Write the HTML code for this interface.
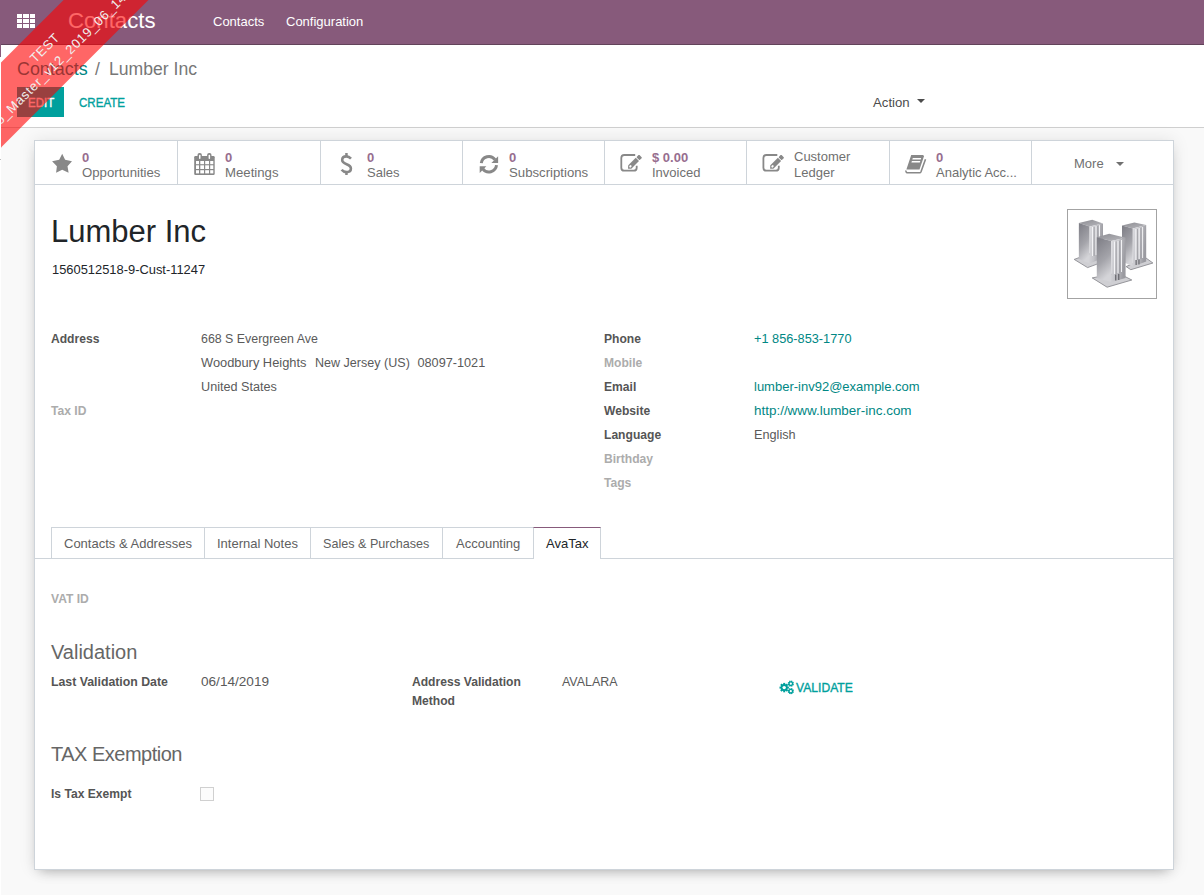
<!DOCTYPE html>
<html><head><meta charset="utf-8">
<style>
html,body{margin:0;padding:0;width:1204px;height:895px;overflow:hidden;background:#f9f9f9;font-family:"Liberation Sans",sans-serif;}
.a{position:absolute;}
.t{position:absolute;white-space:nowrap;line-height:1;font-family:"Liberation Sans",sans-serif;}
.b{font-weight:bold;}
.nav{position:absolute;left:0;top:0;width:1204px;height:44px;background:#875A7B;border-bottom:1px solid #62435a;}
.cp{position:absolute;left:0;top:45px;width:1204px;height:82px;background:#fff;border-bottom:1px solid #cfcfcf;}
.sheet{position:absolute;left:34px;top:140px;width:1138px;height:728px;background:#fff;border:1px solid #ced4da;box-shadow:0 0 16px rgba(0,0,0,0.09),0 6px 12px -6px rgba(0,0,0,0.3);}
.sep{position:absolute;top:141px;width:1px;height:43px;background:#ced4da;}
.ico{position:absolute;}
.sv{color:#976e8f;font-weight:bold;font-size:13px;}
.st{color:#707070;font-size:13px;}
.lbl{color:#555;font-weight:bold;font-size:12.1px;}
.mut{color:#acacac;font-weight:bold;font-size:12.1px;}
.val{color:#5a5a5a;font-size:13px;}
.lnk{color:#008784;font-size:13px;}
.tab{position:absolute;top:527px;height:30px;border:1px solid #ced4da;border-bottom:none;background:#fff;}
.tabt{color:#606060;font-size:13px;}
</style></head>
<body>
<!-- NAVBAR -->
<div class="nav"></div>
<!-- grid icon -->
<div class="a" style="left:17px;top:14px;width:18px;height:14px">
  <div class="a" style="left:0;top:0;width:5px;height:4px;background:#fff"></div>
  <div class="a" style="left:6px;top:0;width:6px;height:4px;background:#fff"></div>
  <div class="a" style="left:13px;top:0;width:5px;height:4px;background:#fff"></div>
  <div class="a" style="left:0;top:5px;width:5px;height:4px;background:#fff"></div>
  <div class="a" style="left:6px;top:5px;width:6px;height:4px;background:#fff"></div>
  <div class="a" style="left:13px;top:5px;width:5px;height:4px;background:#fff"></div>
  <div class="a" style="left:0;top:10px;width:5px;height:4px;background:#fff"></div>
  <div class="a" style="left:6px;top:10px;width:6px;height:4px;background:#fff"></div>
  <div class="a" style="left:13px;top:10px;width:5px;height:4px;background:#fff"></div>
</div>
<div class="t" style="left:68px;top:10px;font-size:22.2px;color:#fff">Contacts</div>
<div class="t" style="left:213px;top:15px;font-size:13px;color:#fff">Contacts</div>
<div class="t" style="left:286px;top:15px;font-size:13px;color:#fff">Configuration</div>

<!-- CONTROL PANEL -->
<div class="cp"></div>
<div class="t" style="left:17px;top:61px;font-size:17.9px;color:#008784">Contacts</div>
<div class="t" style="left:95px;top:61px;font-size:17.6px;color:#777">/</div>
<div class="t" style="left:109px;top:61px;font-size:17.6px;color:#777">Lumber Inc</div>
<div class="a" style="left:17px;top:87px;width:47px;height:30px;background:#00A09D"></div>
<div class="t" style="left:28px;top:96.5px;font-size:12.5px;color:#fff;-webkit-text-stroke:0.35px #fff;transform:scaleX(0.92);transform-origin:0 0">EDIT</div>
<div class="t" style="left:79px;top:96.5px;font-size:12.5px;color:#00A09D;-webkit-text-stroke:0.35px #00A09D;transform:scaleX(0.925);transform-origin:0 0">CREATE</div>
<div class="t" style="left:873px;top:96px;font-size:13.2px;color:#4c4c4c">Action</div>
<div class="a" style="left:917px;top:99px;width:0;height:0;border-left:4px solid transparent;border-right:4px solid transparent;border-top:4px solid #4c4c4c"></div>

<!-- SHEET -->
<div class="sheet"></div>
<div class="a" style="left:35px;top:184px;width:1138px;height:1px;background:#ced4da"></div>
<div class="sep" style="left:177px"></div>
<div class="sep" style="left:320px"></div>
<div class="sep" style="left:462px"></div>
<div class="sep" style="left:604px"></div>
<div class="sep" style="left:746px"></div>
<div class="sep" style="left:889px"></div>
<div class="sep" style="left:1031px"></div>

<!--STATS-->
<div class="t sv" style="left:82px;top:151px">0</div>
<div class="t st" style="left:82px;top:166px;font-size:13.2px">Opportunities</div>
<div class="t sv" style="left:225px;top:151px">0</div>
<div class="t st" style="left:225px;top:166px;font-size:13.2px">Meetings</div>
<div class="t sv" style="left:367px;top:151px">0</div>
<div class="t st" style="left:367px;top:166px">Sales</div>
<div class="t sv" style="left:509px;top:151px">0</div>
<div class="t st" style="left:509px;top:166px;font-size:13.2px">Subscriptions</div>
<div class="t sv" style="left:652px;top:151px">$ 0.00</div>
<div class="t st" style="left:652px;top:166px">Invoiced</div>
<div class="t st" style="left:794px;top:150px">Customer</div>
<div class="t st" style="left:794px;top:166px">Ledger</div>
<div class="t sv" style="left:936px;top:151px">0</div>
<div class="t st" style="left:936px;top:166px">Analytic Acc...</div>
<div class="t st" style="left:1074px;top:157px">More</div>
<div class="a" style="left:1116px;top:162px;width:0;height:0;border-left:4px solid transparent;border-right:4px solid transparent;border-top:4px solid #707070"></div>
<svg class="a" style="left:0;top:0" width="1204" height="895" viewBox="0 0 1204 895">
<g fill="#888">
<polygon points="62.2,153.8 65.1,159.7 72,161.2 67.5,166.3 68.6,172.7 62.2,169.75 56.1,172.7 56.9,166.3 52.1,161.2 59.2,159.7"/>
<rect x="194.2" y="156.1" width="20.5" height="18.8" rx="1.2"/>
<rect x="197.5" y="153" width="4.4" height="7.5" rx="2"/>
<rect x="207.1" y="153" width="4.4" height="7.5" rx="2"/>
</g>
<g fill="#fff">
<rect x="199" y="154.7" width="1.5" height="4.3" rx=".7"/>
<rect x="208.6" y="154.7" width="1.5" height="4.3" rx=".7"/>
<rect x="196" y="161" width="3" height="3.2"/><rect x="200.3" y="161" width="3.7" height="3.2"/><rect x="205.2" y="161" width="3.8" height="3.2"/><rect x="210.2" y="161" width="3.1" height="3.2"/>
<rect x="196" y="165.3" width="3" height="3.7"/><rect x="200.3" y="165.3" width="3.7" height="3.7"/><rect x="205.2" y="165.3" width="3.8" height="3.7"/><rect x="210.2" y="165.3" width="3.1" height="3.7"/>
<rect x="196" y="170.2" width="3" height="3.2"/><rect x="200.3" y="170.2" width="3.7" height="3.2"/><rect x="205.2" y="170.2" width="3.8" height="3.2"/><rect x="210.2" y="170.2" width="3.1" height="3.2"/>
</g>
<g fill="#888">
<rect x="345.2" y="153" width="2.5" height="4"/><rect x="345.2" y="171" width="2.5" height="4"/>
</g>
<path d="M351 158.6 C349.6 157.1 348.1 156.4 346.3 156.4 C343.6 156.4 342.2 157.9 342.2 160 C342.2 162.4 344.1 163.3 346.6 164.2 C349.4 165.2 350.9 166.3 350.9 168.5 C350.9 170.8 349 172.1 346.5 172.1 C344.3 172.1 342.7 171.2 341.6 169.8" fill="none" stroke="#888" stroke-width="2.6"/>
<g fill="none" stroke="#888" stroke-width="3">
<path d="M481.3 163.2 A7.6 7.6 0 0 1 495 159.6"/>
<path d="M496.5 165.2 A7.6 7.6 0 0 1 482.8 168.8"/>
</g>
<g fill="#888">
<polygon points="498.1,156.2 498.1,162.9 491.4,162.9"/>
<polygon points="479.7,172.9 479.7,166.2 486.4,166.2"/>
</g>
<path d="M635.2 155 H624.3 Q621.3 155 621.3 158 V167.7 Q621.3 170.7 624.3 170.7 H633.7 Q636.7 170.7 636.7 167.7 V165.8" fill="none" stroke="#888" stroke-width="1.8"/>
<g transform="translate(628.05,168.7) rotate(-45)" fill="#888">
<polygon points="0,0 2.4,-2.3 2.4,2.3"/>
<rect x="2.3" y="-2.3" width="10.9" height="4.6"/>
<rect x="14" y="-2.2" width="3.7" height="4.4" rx="0.7"/>
<ellipse cx="3.4" cy="0" rx="1.3" ry="1" fill="#fff"/>
</g>
<path d="M777.3 155 H766.4 Q763.4 155 763.4 158 V167.7 Q763.4 170.7 766.4 170.7 H775.8 Q778.8 170.7 778.8 167.7 V165.8" fill="none" stroke="#888" stroke-width="1.8"/>
<g transform="translate(770.15,168.7) rotate(-45)" fill="#888">
<polygon points="0,0 2.4,-2.3 2.4,2.3"/>
<rect x="2.3" y="-2.3" width="10.9" height="4.6"/>
<rect x="14" y="-2.2" width="3.7" height="4.4" rx="0.7"/>
<ellipse cx="3.4" cy="0" rx="1.3" ry="1" fill="#fff"/>
</g>
<polygon points="911.2,155.1 923.2,155.1 924,156.3 919.5,169.6 906.4,169.6" fill="#888"/>
<polygon points="912.8,157.9 921.2,157.9 920.7,159.4 912.3,159.4" fill="#fff"/><polygon points="911.9,160.9 920.3,160.9 919.8,162.4 911.4,162.4" fill="#fff"/>
<path d="M906 170.5 Q905.6 172.8 908 172.8 H919.6 Q920.6 172.8 921 171.8 L925.5 159.2" fill="none" stroke="#888" stroke-width="1.6"/>
</svg>


<!--TITLE-->
<div class="t" style="left:51px;top:216px;font-size:31px;color:#212529">Lumber Inc</div>
<div class="t" style="left:52px;top:264px;font-size:12.9px;color:#212529">1560512518-9-Cust-11247</div>
<div class="a" style="left:1067px;top:209px;width:88px;height:88px;border:1px solid #a3a3a3;background:#fff"></div>
<svg class="a" style="left:1068px;top:210px" width="88" height="88" viewBox="0 0 88 88">
<defs>
<linearGradient id="lf" x1="0" y1="0" x2="0.3" y2="1"><stop offset="0" stop-color="#7c7c84"/><stop offset="0.6" stop-color="#a4a4aa"/><stop offset="1" stop-color="#d4d4d8"/></linearGradient>
<linearGradient id="rf" x1="0" y1="0" x2="1" y2="0.3"><stop offset="0" stop-color="#dcdce0"/><stop offset="0.5" stop-color="#c4c4c9"/><stop offset="1" stop-color="#9a9aa0"/></linearGradient>
<linearGradient id="tf" x1="0" y1="0" x2="1" y2="1"><stop offset="0" stop-color="#8c8c92"/><stop offset="1" stop-color="#b8b8bd"/></linearGradient>
</defs>
<!-- base plates -->
<g fill="#cfcfd3" stroke="#8c8c92" stroke-width="0.9">
<polygon points="6.2,49.4 19.6,57.6 40,50 24,43"/>
<polygon points="58.1,56.6 62.8,59.7 84.9,53 78,48"/>
<polygon points="24.2,67.9 39.1,77.2 63.8,70 50,63"/>
</g>
<!-- building A -->
<polygon points="10.85,12.9 24.2,9.8 35,13.4 21.6,16.5" fill="url(#tf)"/>
<polygon points="10.85,12.9 21.6,16.5 21.6,53.5 10.85,48.9" fill="url(#lf)"/>
<polygon points="21.6,16.5 35,13.4 35,48 21.6,53.5" fill="url(#rf)"/>
<g stroke="#f8f8fa" stroke-width="0.9"><line x1="24.5" y1="17" x2="24.5" y2="46"/><line x1="28" y1="16" x2="28" y2="45"/><line x1="31.5" y1="15.2" x2="31.5" y2="44"/></g>
<g stroke="#909096" stroke-width="0.6"><line x1="26.2" y1="17" x2="26.2" y2="46"/><line x1="29.7" y1="16" x2="29.7" y2="45"/></g>
<!-- building B -->
<polygon points="54,15.5 66.4,12.4 78.2,15 64.8,18.6" fill="url(#tf)"/>
<polygon points="54,15.5 64.8,18.6 64.8,56.6 54,51.5" fill="url(#lf)"/>
<polygon points="64.8,18.6 78.2,15 78.2,51.5 64.8,56.6" fill="url(#rf)"/>
<g stroke="#f8f8fa" stroke-width="0.9"><line x1="67.8" y1="19" x2="67.8" y2="50"/><line x1="71.2" y1="18" x2="71.2" y2="49"/><line x1="74.6" y1="17" x2="74.6" y2="48"/></g>
<g stroke="#909096" stroke-width="0.6"><line x1="69.5" y1="19" x2="69.5" y2="50"/><line x1="72.9" y1="18" x2="72.9" y2="49"/></g>
<g fill="#707076"><rect x="67.5" y="50" width="1.3" height="5"/><rect x="70.3" y="49.5" width="1.3" height="5"/></g>
<!-- building C -->
<polygon points="28.8,27.3 41.2,23.7 57.6,27.8 43.2,30.9" fill="url(#tf)"/>
<polygon points="28.8,27.3 43.2,30.9 43.2,72 28.8,67.9" fill="url(#lf)"/>
<polygon points="43.2,30.9 57.6,27.8 57.6,67.9 43.2,72" fill="url(#rf)"/>
<g stroke="#f8f8fa" stroke-width="0.9"><line x1="46.5" y1="31.5" x2="46.5" y2="64"/><line x1="50" y1="30.8" x2="50" y2="63"/><line x1="53.5" y1="30" x2="53.5" y2="62"/></g>
<g stroke="#909096" stroke-width="0.6"><line x1="48.2" y1="31.5" x2="48.2" y2="64"/><line x1="51.7" y1="30.8" x2="51.7" y2="63"/></g>
<g fill="#707076"><rect x="47" y="64.5" width="1.4" height="6"/><rect x="50" y="64" width="1.4" height="6"/></g>
</svg>


<!--FIELDS-->
<div class="t lbl" style="left:51px;top:333px">Address</div>
<div class="t val" style="left:201px;top:333px;font-size:12.4px">668 S Evergreen Ave</div>
<div class="t val" style="left:201px;top:357px;font-size:12.85px">Woodbury Heights</div><div class="t val" style="left:315px;top:357px;font-size:12.55px">New Jersey (US)</div><div class="t val" style="left:417.5px;top:357px;font-size:12.7px">08097-1021</div>
<div class="t val" style="left:201px;top:381px;font-size:12.65px">United States</div>
<div class="t mut" style="left:51px;top:405px">Tax ID</div>
<div class="t lbl" style="left:604px;top:333px">Phone</div>
<div class="t lnk" style="left:754px;top:333px;font-size:12.75px">+1 856-853-1770</div>
<div class="t mut" style="left:604px;top:357px">Mobile</div>
<div class="t lbl" style="left:604px;top:381px">Email</div>
<div class="t lnk" style="left:754px;top:380px">lumber-inv92@example.com</div>
<div class="t lbl" style="left:604px;top:405px">Website</div>
<div class="t lnk" style="left:754px;top:404px;font-size:13.45px">http://www.lumber-inc.com</div>
<div class="t lbl" style="left:604px;top:429px">Language</div>
<div class="t val" style="left:754px;top:429px;font-size:12.7px">English</div>
<div class="t mut" style="left:604px;top:453px">Birthday</div>
<div class="t mut" style="left:604px;top:477px">Tags</div>


<!--TABS-->
<div class="a" style="left:35px;top:558px;width:1138px;height:1px;background:#ced4da"></div>
<div class="tab" style="left:51px;width:153px"></div>
<div class="tab" style="left:204px;width:106px"></div>
<div class="tab" style="left:310px;width:132px"></div>
<div class="tab" style="left:442px;width:91px"></div>
<div class="tab" style="left:533px;width:66px;height:31px;border-top-color:#875A7B"></div>
<div class="t tabt" style="left:64px;top:537px">Contacts &amp; Addresses</div>
<div class="t tabt" style="left:217px;top:537px">Internal Notes</div>
<div class="t tabt" style="left:323px;top:538px;font-size:12.6px">Sales &amp; Purchases</div>
<div class="t tabt" style="left:456px;top:537px">Accounting</div>
<div class="t tabt" style="left:546px;top:537px;color:#212529">AvaTax</div>


<!--AVATAX-->
<div class="t mut" style="left:51px;top:593px">VAT ID</div>
<div class="t" style="left:51px;top:642px;font-size:20px;color:#666">Validation</div>
<div class="t lbl" style="left:51px;top:676px;font-size:12.3px">Last Validation Date</div>
<div class="t val" style="left:201px;top:675px;font-size:13.6px">06/14/2019</div>
<div class="t lbl" style="left:412px;top:676px">Address Validation</div>
<div class="t lbl" style="left:412px;top:695px">Method</div>
<div class="t val" style="left:562px;top:676px;font-size:12.45px">AVALARA</div>
<div class="t" style="left:796px;top:681.5px;font-size:12.5px;color:#00A09D;-webkit-text-stroke:0.35px #00A09D;transform:scaleX(0.97);transform-origin:0 0">VALIDATE</div>
<svg class="a" style="left:776px;top:677px" width="20" height="20" viewBox="776 677 20 20">
<g fill="#00A09D">
<circle cx="784.2" cy="687.6" r="3.5"/>
<g id="tb"><rect x="783.2" y="682.9" width="2" height="9.4"/><rect x="779.5" y="686.6" width="9.4" height="2"/></g>
<g transform="rotate(45 784.2 687.6)"><rect x="783.2" y="682.9" width="2" height="9.4"/><rect x="779.5" y="686.6" width="9.4" height="2"/></g>
<circle cx="790.8" cy="683.7" r="2.3"/>
<g transform="rotate(22 790.8 683.7)"><rect x="790.1" y="680.6" width="1.4" height="6.2"/><rect x="787.7" y="683" width="6.2" height="1.4"/></g>
<g transform="rotate(67 790.8 683.7)"><rect x="790.1" y="680.6" width="1.4" height="6.2"/><rect x="787.7" y="683" width="6.2" height="1.4"/></g>
<circle cx="790.8" cy="691.2" r="2.3"/>
<g transform="rotate(22 790.8 691.2)"><rect x="790.1" y="688.1" width="1.4" height="6.2"/><rect x="787.7" y="690.5" width="6.2" height="1.4"/></g>
<g transform="rotate(67 790.8 691.2)"><rect x="790.1" y="688.1" width="1.4" height="6.2"/><rect x="787.7" y="690.5" width="6.2" height="1.4"/></g>
</g>
<g fill="#fff"><circle cx="784.2" cy="687.6" r="1.7"/><circle cx="790.8" cy="683.7" r="1.1"/><circle cx="790.8" cy="691.2" r="1.1"/></g>
</svg>
<div class="t" style="left:51px;top:744px;font-size:20px;letter-spacing:-0.5px;color:#666">TAX Exemption</div>
<div class="t lbl" style="left:51px;top:788px">Is Tax Exempt</div>
<div class="a" style="left:200px;top:787px;width:12px;height:12px;border:1px solid #d0d0d0;background:#fcfcfc"></div>


<!--RIBBON-->
<div class="a" style="left:0;top:44px;width:1px;height:13px;background:#875A7B"></div>
<div class="a" style="left:0;top:57px;width:1px;height:838px;background:#fff;z-index:60"></div><div class="a" style="left:0;top:159px;width:1px;height:1px;background:#bbb;z-index:61"></div>
<div class="a" style="left:1px;top:0;width:1203px;height:895px;overflow:hidden;z-index:50;pointer-events:none">
 <div class="a" style="left:-148.35px;top:22.6px;width:400px;height:60.1px;background:rgba(255,0,0,0.6);transform:rotate(-45deg);color:#f0f0f0">
  <div class="t" style="left:0;width:395.7px;top:13.85px;text-align:center;font-size:13px;letter-spacing:0.6px">TEST</div>
  <div class="t" style="right:280.3px;top:33.05px;font-size:13px;letter-spacing:0.76px">Odoo</div>
  <div class="t" style="left:119.7px;top:33.05px;font-size:13px;letter-spacing:0.76px">_Master_v12_2019_06_14</div>
 </div>
</div>

</body></html>
